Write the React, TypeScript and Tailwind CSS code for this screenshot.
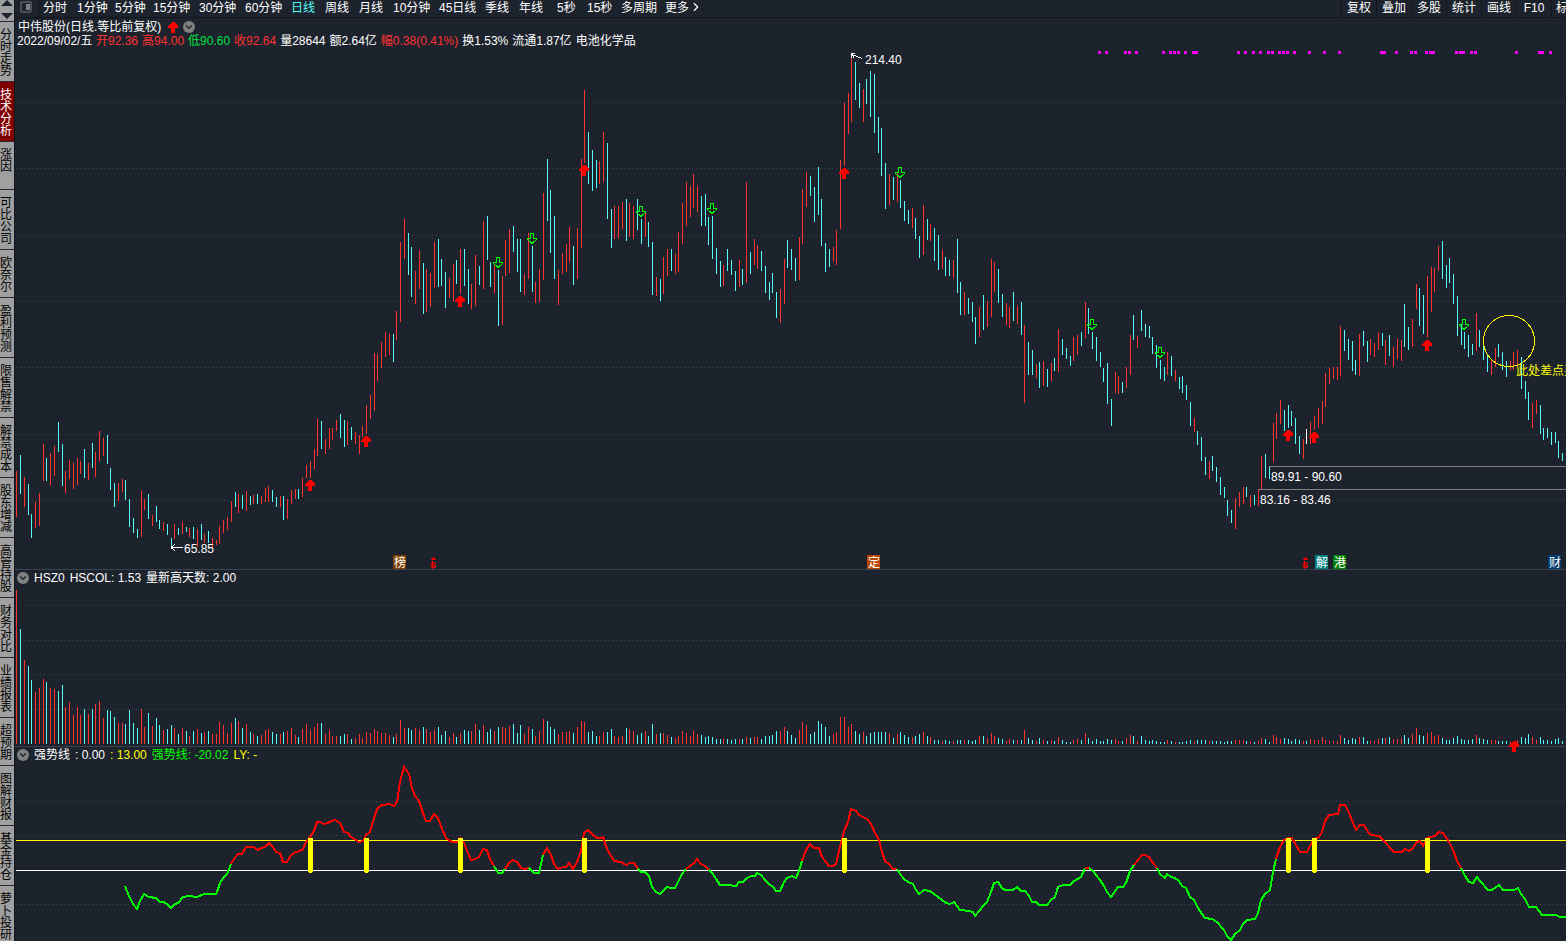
import { ChevronDown, ChevronRight } from 'lucide-react';
import { useState } from 'react';

// Chart data is kept in window pixels, each panel shifts it by its own origin
const LEFT = 15;
const PRICE_TOP = 18;
const VOLUME_TOP = 570;
const STRENGTH_TOP = 747;
const VOLUME_BASE = 744;

// colour + x, high, low, volume
const BARS = `
r16 471 517 154,c20 455 494 115,r24 477 507 84,c28 484 515 78,c31 514 538 64,r35 502 528 52,r39 493 526 56,r43 444 481 65,
c46 458 481 62,r50 453 485 56,r54 446 476 55,c58 422 452 53,c62 444 486 59,r65 471 493 37,r69 460 479 42,r73 463 489 29,
r77 458 485 37,r80 461 474 29,c84 449 478 35,r88 463 480 30,c92 443 468 35,r95 452 477 40,r99 431 461 43,r103 438 456 26,
c107 435 464 34,c110 468 490 33,c114 483 507 27,r118 483 501 21,r122 479 492 21,c125 480 500 20,c129 499 527 34,c133 518 533 21,
c137 529 538 16,r141 491 537 35,r144 499 510 17,c148 494 519 31,r152 515 526 18,c156 506 522 26,c159 520 529 19,r163 522 531 14,
c167 524 535 15,c171 538 548 19,r174 524 539 16,c178 528 535 10,r182 522 534 16,c186 527 532 13,r189 528 537 8,c193 527 539 13,
r197 529 547 15,c201 524 540 11,r204 534 543 12,c208 531 543 13,r212 538 548 10,r216 540 545 10,r219 526 544 22,r223 520 533 19,
r227 517 530 11,r231 501 522 21,c235 492 507 26,r238 494 513 23,c242 495 509 16,r246 491 511 20,c250 496 505 12,r253 495 504 10,
c257 494 504 8,r261 496 504 9,r265 488 502 14,r268 486 502 15,c272 490 502 12,c276 497 507 10,r280 496 507 10,c283 496 520 12,
r287 499 519 13,r291 490 504 16,r295 489 499 9,c298 489 499 7,r302 478 497 15,r306 465 478 20,r310 461 478 14,r314 449 469 17,
r317 419 456 21,c321 421 449 21,r325 439 454 10,r329 428 449 14,r332 428 440 8,r336 420 431 8,c340 414 438 8,c344 420 447 10,
r347 421 445 10,c351 427 440 5,r355 432 444 6,r359 435 454 10,r362 426 437 6,r366 405 434 12,r370 395 419 11,r374 353 411 15,
r377 354 381 13,r381 342 368 11,r385 332 357 11,r389 334 355 9,c393 334 362 7,r396 311 340 10,r400 242 322 24,r404 219 259 16,
c408 233 275 16,c411 247 297 14,r415 271 304 16,r419 250 289 14,c423 263 314 17,r426 269 312 15,r430 273 307 12,r434 242 288 14,
c438 239 287 17,c441 259 286 9,c445 272 308 13,r449 278 298 7,r453 264 301 11,c456 260 284 7,r460 249 294 11,c464 249 286 14,
c468 269 304 13,r471 284 309 13,r475 255 306 20,c479 266 285 14,r483 221 289 19,c487 216 260 12,c490 262 287 15,r494 266 293 13,
c498 270 326 17,r502 276 325 17,r505 240 276 16,r509 229 273 18,c513 226 252 20,c517 239 272 11,c520 239 292 19,r524 274 295 10,
r528 233 279 17,c532 246 292 15,r535 282 303 8,r539 269 302 13,r543 193 280 25,c547 159 221 23,c550 190 253 17,c554 216 279 15,
r558 270 305 10,r562 253 274 12,r566 244 272 12,r569 227 262 13,c573 246 285 11,r577 228 279 17,r581 159 248 23,r584 90 163 22,
c588 132 184 12,c592 150 191 13,c596 160 188 8,r599 161 184 8,r603 132 182 12,c607 143 219 12,c611 209 248 15,r614 206 239 8,
r618 206 238 7,r622 202 229 8,c626 199 241 16,r629 203 237 15,r633 206 239 13,c637 199 230 9,c641 219 244 11,r645 213 237 13,
c648 222 247 8,c652 242 295 20,r656 277 296 10,c660 279 301 11,r663 257 294 11,r667 249 276 9,c671 249 271 7,r675 254 274 6,
r678 232 272 8,r682 203 244 13,r686 182 226 11,r690 186 217 8,r693 174 208 13,r697 186 212 10,c701 196 226 9,c705 194 226 7,
c708 217 245 8,c712 216 259 7,c716 248 274 5,c720 261 287 5,r723 265 286 5,c727 249 271 5,c731 260 275 4,c735 271 291 5,
r739 260 287 5,c742 269 285 5,r746 182 283 7,c750 252 274 6,r754 239 265 7,r757 245 269 7,c761 251 271 5,c765 266 293 8,
c769 282 300 8,c772 273 293 9,c776 292 318 13,r780 289 323 13,r784 259 304 17,c787 240 268 13,c791 249 270 9,c795 258 281 6,
r799 237 280 14,r802 189 244 22,r806 172 207 19,c810 176 196 10,c814 187 222 12,c818 167 215 23,c821 199 246 20,c825 243 272 17,
c829 249 267 8,r833 247 262 10,r836 230 265 12,r840 160 229 27,r844 103 166 27,r848 93 134 17,r851 57 122 20,c855 62 100 13,
c859 83 108 10,r863 89 122 12,c866 79 104 8,c870 71 117 11,c874 74 133 12,c878 117 153 12,c881 128 176 12,c885 163 209 12,
r889 174 205 11,c893 177 200 6,r897 173 202 10,c900 180 208 12,c904 201 221 9,c908 210 224 7,r912 208 228 7,c915 218 239 8,
c919 236 258 10,r923 205 255 12,c927 219 240 8,r930 224 241 7,c934 228 261 4,c938 235 270 4,r942 250 269 3,c945 257 276 4,
c949 260 276 3,r953 260 278 3,c957 239 293 4,c960 282 315 4,r964 292 315 4,c968 298 314 4,c972 302 322 3,c975 317 344 4,
r979 307 337 8,c983 295 330 8,r987 301 327 6,r991 259 317 11,r994 262 292 8,c998 269 303 6,c1002 294 317 5,r1006 303 325 3,
r1009 307 328 5,c1013 292 321 4,r1017 306 324 4,c1021 302 335 4,r1024 325 403 14,c1028 342 375 6,c1032 350 375 4,r1036 364 378 3,
c1039 362 388 6,r1043 361 386 4,c1047 369 387 3,r1051 363 381 4,c1054 358 371 3,r1058 329 372 7,c1062 339 355 4,c1066 348 359 2,
c1070 356 366 2,r1073 337 361 4,r1077 335 355 5,c1081 332 346 4,r1085 302 338 11,c1088 308 334 6,c1092 332 349 3,c1096 337 361 5,
c1100 352 367 3,c1103 368 382 3,c1107 363 404 5,c1111 399 426 4,r1115 372 393 5,r1118 376 394 3,c1122 382 393 3,r1126 367 388 6,
r1130 335 375 9,c1133 315 340 8,r1137 336 348 3,c1141 310 331 8,c1145 324 337 4,c1149 326 338 3,c1152 337 354 4,c1156 345 368 3,
c1160 360 379 2,c1164 367 381 2,r1167 352 375 4,c1171 356 376 3,r1175 370 381 2,c1179 377 389 2,c1182 376 393 2,c1186 385 400 3,
c1190 402 426 4,r1194 418 432 3,c1197 431 445 4,c1201 437 461 4,c1205 457 475 4,r1209 461 479 3,c1212 456 471 3,c1216 467 482 3,
c1220 477 495 3,c1224 487 498 2,c1227 500 516 3,c1231 510 523 3,r1235 498 529 4,r1239 492 507 4,r1243 487 504 4,c1246 487 497 3,
r1250 495 507 3,c1254 495 505 2,r1258 490 506 3,r1261 456 489 6,c1265 454 478 5,c1269 467 479 2,r1273 423 462 9,r1276 413 439 7,
r1280 400 424 5,c1284 410 431 6,c1288 405 428 5,c1291 411 426 3,c1295 418 444 5,c1299 436 454 4,r1303 439 459 3,w1306 429 444 3,
r1310 422 444 5,r1314 416 430 4,r1318 408 428 4,r1322 401 424 7,r1325 373 407 4,r1329 368 384 3,r1333 367 379 3,r1337 367 380 3,
r1340 326 376 9,c1344 330 351 6,c1348 339 360 4,c1352 341 371 6,c1355 360 375 5,r1359 334 376 7,c1363 331 346 7,c1367 341 362 3,
r1370 339 355 3,r1374 343 357 3,r1378 332 350 5,c1382 333 346 6,r1385 340 365 6,c1389 335 356 7,r1393 347 367 5,r1397 339 359 5,
r1401 340 361 6,c1404 304 347 9,c1408 327 350 6,r1412 319 347 10,r1416 284 309 16,c1419 288 326 9,c1423 295 334 8,r1427 276 338 11,
r1431 267 312 12,r1434 268 292 8,r1438 246 271 9,c1442 241 279 6,c1446 265 288 4,c1449 258 283 4,c1453 274 304 6,c1457 296 336 8,
c1461 325 345 5,c1464 332 349 4,c1468 335 357 4,c1472 344 355 5,r1476 313 351 9,c1479 330 347 6,c1483 337 360 5,c1487 354 372 4,
r1491 359 375 4,r1495 348 367 4,c1498 344 357 3,c1502 352 370 3,c1506 361 377 3,r1510 361 370 2,r1513 352 370 3,r1517 350 367 4,
c1521 357 389 7,c1525 381 399 6,c1528 392 420 10,r1532 403 428 7,r1536 400 414 4,c1540 405 434 7,c1543 428 440 4,c1547 428 438 4,
c1551 432 445 3,c1555 432 443 5,c1558 441 458 6,c1562 453 461 3`
	.split(',')
	.map((row) => {
		const item = row.trim();
		const [x, high, low, volume] = item.slice(1).split(' ').map(Number);
		return { kind: item[0], x, high, low, volume };
	});

const BAR_COLORS: Record<string, string> = { r: '#ff3232', c: '#54fcfc', w: '#ffffff' };

const STRENGTH = [
	{ color: '#00ff00', points: '125,886 129,896 133,904 137,909 140,901 144,894 149,897 156,898 160,902 164,902 168,905 171,908 175,904 178,903 183,897 189,896 197,897 204,894 216,894 217,892 220,883 223,878 227,874 231,864' },
	{ color: '#ff0000', points: '231,864 234,859 238,854 242,854 246,847 253,847 258,850 261,848 265,847 269,843 273,847 276,852 280,853 283,862 287,862 291,855 296,852 300,851 303,849 306,842 310,837 314,831 317,822 320,822 324,824 328,823 331,821 335,820 340,823 344,832 348,833 351,837 359,842 363,841 366,835 370,832 374,818 377,809 382,805 390,804 394,806 397,802 400,782 404,767 409,774 412,788 415,796 419,801 423,813 426,821 430,821 434,814 438,818 442,829 446,838 450,841 453,842 458,842 460,838 464,843 468,853 471,860 475,859 479,857 483,849 487,850 490,859 494,866' },
	{ color: '#00ff00', points: '494,866 498,873 502,873 505,869' },
	{ color: '#ff0000', points: '505,869 509,863 513,860 517,862 521,868 525,869 529,868' },
	{ color: '#00ff00', points: '529,868 534,873 539,873 543,855' },
	{ color: '#ff0000', points: '543,855 547,848 551,855 554,864 558,869 563,867 566,867 569,863 573,869 577,862 581,851 584,833 588,830 593,835 597,838 601,838 603,837 607,849 614,861 621,862 626,865 630,863 634,863 638,869' },
	{ color: '#00ff00', points: '638,869 641,872 645,872 649,876 652,887 656,892 660,894 664,890 667,887 671,888 675,888 679,880 682,874 686,869' },
	{ color: '#ff0000', points: '686,869 690,866 694,863 697,859 701,864 705,866 709,870' },
	{ color: '#00ff00', points: '709,870 713,874 716,879 720,885 727,885 736,886 739,882 743,882 747,878 751,876 755,876 757,873 761,875 765,880 769,884 773,887 776,891 780,891 784,882 787,878 792,876 796,878 799,871 802,861' },
	{ color: '#ff0000', points: '802,861 806,850 810,844 814,848 819,848 822,857 826,862 829,866 833,866 836,864 840,847 844,831 848,822 851,809 856,811 859,815 867,819 871,824 875,833 879,840 882,852 885,861 889,864 893,869 897,869' },
	{ color: '#00ff00', points: '897,869 900,874 904,879 908,882 913,884 916,890 919,894 924,890 930,891 938,897 946,903 950,904 954,902 957,906 960,910 969,911 973,912 975,916 979,911 984,905 987,902 991,892 994,883 998,882 1002,888 1005,890 1013,890 1017,887 1021,891 1025,891 1029,896 1032,902 1036,902 1039,905 1047,905 1051,900 1055,897 1058,887 1063,885 1070,885 1074,881 1081,877 1085,868' },
	{ color: '#ff0000', points: '1085,868 1089,868' },
	{ color: '#00ff00', points: '1089,868 1093,871 1096,875 1100,880 1104,886 1107,892 1111,897 1118,887 1123,887 1126,883 1130,871 1134,865' },
	{ color: '#ff0000', points: '1134,865 1138,860 1142,855 1145,855 1149,857 1153,863 1157,868' },
	{ color: '#00ff00', points: '1157,868 1160,874 1165,878 1167,874 1171,877 1175,878 1179,881 1182,886 1186,888 1190,897 1194,900 1198,908 1202,914 1205,918 1212,919 1217,922 1224,930 1227,936 1231,940 1235,934 1240,930 1243,924 1247,920 1255,919 1258,913 1261,900 1265,894 1270,890 1273,872 1276,859' },
	{ color: '#ff0000', points: '1276,859 1280,847 1284,840 1288,838 1292,838 1296,845 1300,852 1307,852 1310,846 1314,839 1319,837 1322,832 1325,821 1329,815 1338,814 1340,805 1345,805 1349,813 1356,830 1360,825 1364,825 1368,832 1371,835 1379,836 1383,840 1386,843 1390,848 1394,852 1402,852 1405,849 1409,851 1412,849 1417,842 1420,841 1423,846 1427,838 1435,836 1439,832 1443,833 1446,837 1450,844 1454,852 1457,861 1461,868' },
	{ color: '#00ff00', points: '1461,868 1465,876 1469,882 1473,883 1477,877 1480,881 1488,890 1492,890 1499,885 1503,890 1514,890 1518,888 1521,894 1525,899 1529,907 1536,907 1542,915 1556,915 1560,917 1566,917' },
];

const BUY_MARKS = [[310, 480], [366, 436], [460, 296], [584, 165], [844, 168], [1288, 430], [1314, 432], [1427, 340]];
const SELL_MARKS = [[498, 257], [532, 233], [641, 206], [712, 203], [900, 167], [1092, 319], [1160, 347], [1464, 319]];
const SIGNAL_BARS = [310, 366, 460, 584, 844, 1288, 1314, 1427];

const DOTS = [
	1098, 1105, 1124, 1128, 1135, 1162, 1169, 1173, 1177, 1184, 1192, 1195, 1237, 1244, 1252, 1259, 1267, 1271, 1278, 1282,
	1286, 1293, 1308, 1323, 1338, 1380, 1383, 1395, 1410, 1414, 1425, 1429, 1432, 1455, 1459, 1462, 1470, 1474, 1515, 1538,
	1541, 1549,
];

const BADGES = [
	{ x: 393, text: '榜', fill: '#804000' },
	{ x: 867, text: '定', fill: '#b84400' },
	{ x: 1315, text: '解', fill: '#008080' },
	{ x: 1333, text: '港', fill: '#008000' },
	{ x: 1548, text: '财', fill: '#003a70' },
];

const PERIODS = [
	{ label: '分时', width: 'w-[34px]' },
	{ label: '1分钟', width: 'w-[38px]' },
	{ label: '5分钟', width: 'w-[38px]' },
	{ label: '15分钟', width: 'w-[46px]' },
	{ label: '30分钟', width: 'w-[46px]' },
	{ label: '60分钟', width: 'w-[46px]' },
	{ label: '日线', width: 'w-[34px]' },
	{ label: '周线', width: 'w-[34px]' },
	{ label: '月线', width: 'w-[34px]' },
	{ label: '10分钟', width: 'w-[46px]' },
	{ label: '45日线', width: 'w-[46px]' },
	{ label: '季线', width: 'w-[34px]' },
	{ label: '年线', width: 'w-[38px]' },
	{ label: '5秒', width: 'w-[30px]' },
	{ label: '15秒', width: 'w-[34px]' },
	{ label: '多周期', width: 'w-[44px]' },
];

const TOOLS = ['复权', '叠加', '多股', '统计', '画线', 'F10'];

const SIDE_TABS = [
	'分时走势', '技术分析', '涨因', '可比公司', '欧奈尔', '盈利预测', '限售解禁', '解禁成本',
	'股东增减', '高管持股', '财务对比', '业绩报表', '超预期', '图解财报', '基金持仓', '萝卜投研',
];

function SideTabs() {
	const [active, setActive] = useState('技术分析');

	return (
		<nav className="flex w-[15px] shrink-0 flex-col overflow-hidden border-r border-[#11151c] bg-[#a0a0a0]">
			<div className="flex h-[22px] shrink-0 flex-col items-center justify-between border-b border-[#2a2a36] pb-px">
				<button aria-label="上移" className="block">
					<svg width="14" height="8" className="block"><path d="M7 0L13 6H1Z" fill="#1d232d" /></svg>
				</button>
				<button aria-label="下移" className="block">
					<svg width="14" height="9" className="block"><path d="M7 8L13 2H1Z" fill="#1d232d" /></svg>
				</button>
			</div>
			{SIDE_TABS.map((tab) => (
				<button
					key={tab}
					onClick={() => setActive(tab)}
					className={`flex min-h-12 w-full shrink-0 items-start border-b border-[#2a2a36] pt-[7px] pb-[4px] text-left leading-[12px] ${tab === active ? 'bg-[#800000] text-white' : 'text-black'}`}
				>
					<span className="block w-[12px] break-all">{tab}</span>
				</button>
			))}
		</nav>
	);
}

function Toolbar() {
	const [period, setPeriod] = useState('日线');

	return (
		<header className="flex h-[18px] shrink-0 items-stretch justify-between border-b border-[#12161d] leading-[16px]">
			<div className="flex">
				<button aria-label="布局" className="mr-[4px] flex w-[24px] items-start border-r border-[#12161d] pt-px pl-[5px]">
					<svg width="12" height="12" fill="none">
						<rect x="1" y="1" width="10" height="10" rx="1" stroke="#595f69" strokeWidth="1.5" />
						<rect x="6" y="3" width="4" height="6" fill="#7a808a" />
					</svg>
				</button>
				{PERIODS.map(({ label, width }) => (
					<button
						key={label}
						onClick={() => setPeriod(label)}
						className={`flex items-start text-left whitespace-nowrap ${width} ${label === period ? 'text-[#54fcfc]' : 'text-white'}`}
					>
						{label}
					</button>
				))}
				<button className="flex items-start">
					更多
					<ChevronRight size={14} strokeWidth={2} />
				</button>
			</div>
			<div className="flex">
				{TOOLS.map((tool) => (
					<button key={tool} className="flex w-[35px] items-start justify-center border-l border-[#12161d]">{tool}</button>
				))}
				<button aria-label="标记" className="flex w-[15px] items-start overflow-hidden border-l border-[#12161d] pl-[4px]">
					<span className="shrink-0">标</span>
				</button>
			</div>
		</header>
	);
}

function CollapseButton() {
	return (
		<button aria-label="展开" className="flex size-[12px] shrink-0 items-center justify-center rounded-full bg-[#808080] text-[#1d232d]">
			<ChevronDown size={10} strokeWidth={3} />
		</button>
	);
}

function UpArrow({ x, y }: { x: number; y: number }) {
	return <path transform={`translate(${x} ${y})`} d="M-1 0h2l4 4v2h-3v5h-4v-5h-3v-2z" fill="#ff0000" />;
}

function GridLines({ rows }: { rows: number[] }) {
	return rows.map((y) => (
		<line key={y} x1="16" x2="4000" y1={y + 0.5} y2={y + 0.5} stroke="#414855" strokeDasharray="1 3" />
	));
}

function PriceChart() {
	return (
		<svg className="col-start-1 row-start-1 size-full" shapeRendering="crispEdges" role="img" aria-label="日线">
			<g transform={`translate(${-LEFT} ${-PRICE_TOP})`}>
				<GridLines rows={[102, 168, 235, 301, 367, 434, 500]} />
				{DOTS.map((x) => <rect key={x} x={x} y="51" width="3" height="3" fill="#ff00ff" />)}
				{BARS.map((bar) => (
					<rect key={bar.x} x={bar.x} y={bar.high} width="1" height={bar.low - bar.high} fill={BAR_COLORS[bar.kind]} />
				))}
				<path d="M1269.5 479V466.5H4000M1258.5 506V489.5H4000" stroke="#808080" fill="none" />
				<path d="M1269.5 467V479" stroke="#54fcfc" />
				<path d="M1258.5 490V506" stroke="#ff3232" />
				{BUY_MARKS.map(([x, y]) => <UpArrow key={x} x={x} y={y} />)}
				{SELL_MARKS.map(([x, y]) => (
					<path key={x} transform={`translate(${x} ${y})`} d="M-1.5 .5h3v5h3v1l-4.5 4l-4.5-4v-1h3z" stroke="#00ff00" fill="none" />
				))}
				{/* high and low of the visible range */}
				<path d="M852 54.5L862 58.5M851.5 58V54M851 53.5H855M852 55L854 57.5" stroke="#ffffff" fill="none" />
				<path d="M171 547.5H183M171 547.5L175 544.5M171 547.5L175 550.5" stroke="#ffffff" fill="none" />
				<circle cx="1509" cy="341" r="25.5" stroke="#ffff00" fill="none" />
				<g fill="#ffffff" fontSize="12">
					<text x="865" y="64">214.40</text>
					<text x="184" y="553">65.85</text>
					<text x="1271" y="481">89.91 - 90.60</text>
					<text x="1260" y="504">83.16 - 83.46</text>
					<text x="1516" y="375" fill="#ffff00">此处差点买</text>
				</g>
				{BADGES.map(({ x, text, fill }) => (
					<g key={x}>
						<rect x={x} y="555" width="13" height="14" fill={fill} />
						<text x={x + 1} y="567" fontSize="12" fill="#ffffff">{text}</text>
					</g>
				))}
				{[433, 1305].map((x) => (
					<g key={x} fill="#ff0000">
						<path d={`M${x - 3} 560L${x} 557L${x + 3} 560Z`} />
						<text x={x} y="568" fontSize="11" fontWeight="bold" textAnchor="middle">s</text>
						<rect x={x - 1} y="561" width="1" height="8" />
					</g>
				))}
			</g>
		</svg>
	);
}

function VolumeChart() {
	return (
		<svg className="col-start-1 row-start-1 size-full" shapeRendering="crispEdges" role="img" aria-label="成交量">
			<g transform={`translate(${-LEFT} ${-VOLUME_TOP})`}>
				<GridLines rows={[605, 640, 674, 709]} />
				{BARS.map((bar) => (
					<rect key={bar.x} x={bar.x} y={VOLUME_BASE - bar.volume} width="1" height={bar.volume} fill={bar.kind === 'r' ? '#ff3232' : '#54fcfc'} />
				))}
			</g>
		</svg>
	);
}

function StrengthChart() {
	return (
		<svg className="col-start-1 row-start-1 size-full overflow-visible" shapeRendering="crispEdges" role="img" aria-label="强势线">
			<g transform={`translate(${-LEFT} ${-STRENGTH_TOP})`} fill="none">
				<GridLines rows={[801, 835, 904]} />
				<line x1="16" x2="4000" y1="840.5" y2="840.5" stroke="#ffff00" />
				<line x1="16" x2="4000" y1="870.5" y2="870.5" stroke="#ffffff" />
				{STRENGTH.map(({ color, points }) => (
					<polyline key={points} points={points} stroke={color} strokeWidth="2" />
				))}
				{SIGNAL_BARS.map((x) => (
					<line key={x} x1={x + 0.5} x2={x + 0.5} y1="840" y2="870.5" stroke="#ffff00" strokeWidth="5" strokeLinecap="round" />
				))}
				<UpArrow x={1514} y={741} />
			</g>
		</svg>
	);
}

export default function App() {
	return (
		<div className="flex h-screen overflow-hidden bg-[#1d232d] text-[12px] text-white [font-family:'Liberation_Sans','Noto_Sans_CJK_SC',sans-serif]">
			<SideTabs />
			<main className="flex min-w-0 flex-1 flex-col">
				<Toolbar />

				<section className="grid h-[552px] shrink-0 grid-cols-1 grid-rows-1 overflow-hidden border-b border-[#39434f]">
					<PriceChart />
					<div className="col-start-1 row-start-1 self-start pt-[2px] leading-[14px] whitespace-nowrap">
						<div className="flex items-center pl-[3px]">
							<h1>中伟股份(日线.等比前复权)</h1>
							<svg width="10" height="11" className="mr-[5px] ml-[7px]" shapeRendering="crispEdges">
								<UpArrow x={5} y={0} />
							</svg>
							<CollapseButton />
						</div>
						<div className="flex gap-1 pl-[2px]">
							<span className="w-[75px]">2022/09/02/五</span>
							<span className="text-[#ff3232]">开92.36</span>
							<span className="text-[#ff3232]">高94.00</span>
							<span className="text-[#00e040]">低90.60</span>
							<span className="text-[#ff3232]">收92.64</span>
							<span>量28644</span>
							<span>额2.64亿</span>
							<span className="text-[#ff3232]">幅0.38(0.41%)</span>
							<span>换1.53%</span>
							<span>流通1.87亿</span>
							<span>电池化学品</span>
						</div>
					</div>
				</section>

				<section className="grid h-[177px] shrink-0 grid-cols-1 grid-rows-1 border-b border-[#39434f]">
					<VolumeChart />
					<div className="col-start-1 row-start-1 flex items-center gap-[5px] self-start pt-px pl-[2px] leading-[14px]">
						<CollapseButton />
						<span>HSZ0</span>
						<span>HSCOL: 1.53</span>
						<span>量新高天数: 2.00</span>
					</div>
				</section>

				<section className="grid min-h-0 flex-1 grid-cols-1 grid-rows-1">
					<StrengthChart />
					<div className="col-start-1 row-start-1 flex items-center gap-[5px] self-start pt-px pl-[2px] leading-[14px]">
						<CollapseButton />
						<span>强势线</span>
						<span>: 0.00</span>
						<span className="text-[#ffff00]">: 13.00</span>
						<span className="text-[#00ff00]">强势线: -20.02</span>
						<span className="text-[#ffff00]">LY: -</span>
					</div>
				</section>
			</main>
		</div>
	);
}
